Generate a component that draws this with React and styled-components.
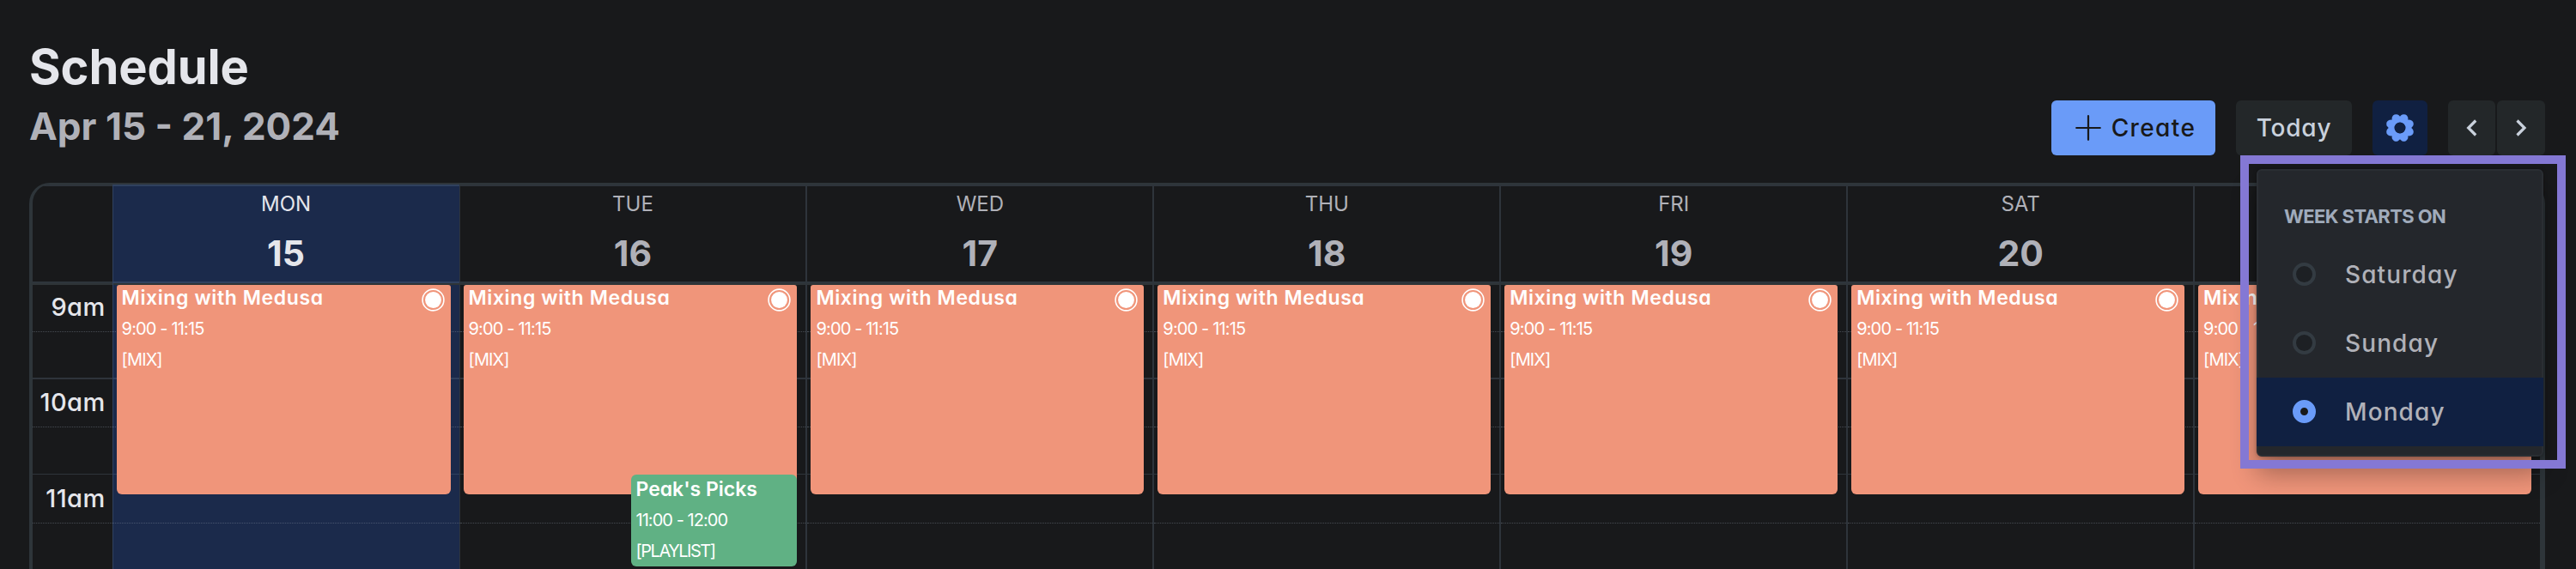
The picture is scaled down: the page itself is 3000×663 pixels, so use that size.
import React from 'react';
import styled, { createGlobalStyle, css } from 'styled-components';

const line = 'rgba(110, 135, 155, 0.25)';

const GlobalStyle = createGlobalStyle`
  *, *::before, *::after { box-sizing: border-box; }
  body {
    margin: 0;
    background: #18191b;
    color: #e5e6eb;
    font-family: Inter, 'Open Sans', sans-serif;
    font-feature-settings: 'cv11';
    overflow: hidden;
  }
`;

const Page = styled.main`
  position: relative;
  height: 663px;
  padding: 45px 36px 0 34px;
  overflow: hidden;
`;

const Header = styled.header`
  display: flex;
  justify-content: space-between;
  align-items: flex-end;
  height: 136px;
  margin-bottom: 32px;
`;

const Titles = styled.div`
  display: flex;
  flex-direction: column;
  gap: 4px;
  height: 136px;
`;

const Title = styled.h1`
  margin: 0;
  font-size: 56px;
  line-height: 66px;
  font-weight: 700;
  letter-spacing: -0.1px;
  font-feature-settings: normal;
`;

const Period = styled.h2`
  margin: 0;
  color: #b0b1b8;
  font-size: 44px;
  line-height: 64px;
  font-weight: 700;
  font-feature-settings: normal;
`;

const Toolbar = styled.div`
  display: flex;
  gap: 24px;
`;

const Pair = styled.div`
  display: flex;
  gap: 2px;
`;

const tones = {
  primary: css`background: #6a9bf8; color: #18191b; padding-left: 5px;`,
  active: css`background: #102041; color: #6a9bf8;`,
  plain: css`background: #232729; color: #c9d1dc;`,
};

const Button = styled.button`
  display: flex;
  align-items: center;
  justify-content: center;
  gap: 12px;
  width: ${(p) => p.$width}px;
  height: 64px;
  padding: 0;
  border: 0;
  border-radius: 6px;
  font: 500 28px/64px Inter, sans-serif;
  font-feature-settings: 'cv11';
  letter-spacing: ${(p) => p.$spacing || 0}px;
  ${(p) => tones[p.$tone || 'plain']}
`;

const Calendar = styled.section`
  height: 470px;
  border: solid #2e353a;
  border-width: 2px 6px 0 4px;
  border-radius: 24px 24px 0 0;
  overflow: hidden;
`;

const Columns = styled.div`
  display: grid;
  grid-template-columns: 92.6px repeat(7, 1fr);
`;

const HeadCell = styled.div`
  display: flex;
  flex-direction: column;
  align-items: center;
  gap: 7px;
  height: 115px;
  padding-top: 1px;
  border: solid ${line};
  border-width: 2px 0;
  border-left: ${(p) => p.$edge}px solid ${line};
  background: ${(p) => (p.$today ? '#1b2a4b' : 'transparent')};
  color: ${(p) => (p.$today ? '#e5e6eb' : '#b0b1b8')};
`;

const Weekday = styled.span`
  font-size: 24px;
  line-height: 40px;
`;

const DayNumber = styled.span`
  font-size: 41px;
  line-height: 60px;
  font-weight: 700;
`;

const Body = styled.div`
  position: relative;
  display: grid;
  grid-template-rows: 110px 112px 113px;
  border-left: ${(p) => p.$edge}px solid ${line};
  background: ${(p) => (p.$today ? '#1b2a4b' : 'transparent')};
`;

const Hour = styled.div`
  display: grid;
  grid-template-rows: 1fr 1fr;
  border-top: ${(p) => p.$rule}px solid ${(p) => (p.$first ? '#2e3437' : line)};
`;

const Half = styled.div`
  padding: ${(p) => p.$top || 0}px 8px 0 0;
  text-align: right;
  font-size: 29px;
  line-height: 48px;
  font-weight: 500;
  letter-spacing: 0.4px;
  & + & { border-top: 1px dotted rgba(140, 150, 165, 0.4); }
`;

const Event = styled.article`
  position: absolute;
  top: ${(p) => p.$top}px;
  left: ${(p) => p.$left};
  right: 10px;
  height: ${(p) => p.$height}px;
  padding: ${(p) => (p.$cut ? 0 : 2)}px 7px 0 6px;
  border-radius: ${(p) => (p.$cut ? '3px 3px 6px 6px' : '6px')};
  background: ${(p) => p.$color};
  color: #fff;
`;

const EventHead = styled.div`
  display: flex;
  justify-content: space-between;
  align-items: flex-start;
  height: 36px;
  margin-top: -3px;
`;

const EventTitle = styled.strong`
  font-size: 23px;
  line-height: 36px;
  font-weight: 600;
  letter-spacing: ${(p) => p.$spacing}px;
`;

const EventLine = styled.div`
  font-size: 20px;
  line-height: 36px;
  letter-spacing: ${(p) => p.$spacing}px;
`;

const RecordMark = styled.svg`
  margin-top: 7px;
`;

const Menu = styled.div`
  position: absolute;
  top: 197px;
  right: 38px;
  width: 334px;
  height: 335px;
  padding-top: 25px;
  border: 2px solid #2a2e33;
  border-radius: 6px;
  background: #24272c;
  box-shadow: 0 20px 30px rgba(0, 0, 0, 0.32), 0 0 4px rgba(0, 0, 0, 0.3);
`;

const MenuTitle = styled.div`
  padding-left: 30px;
  color: #a0abbb;
  font-size: 22px;
  line-height: 56px;
  font-weight: 700;
  letter-spacing: -0.6px;
`;

const Option = styled.div`
  display: flex;
  align-items: center;
  gap: 34px;
  height: 80px;
  margin: 0 -2px;
  padding: 0 0 1px 42px;
  background: ${(p) => (p.$selected ? '#102041' : 'transparent')};
  color: #b0b1b8;
  font-size: 28px;
  font-weight: 500;
  letter-spacing: 1.1px;
`;

const Radio = styled.span`
  width: 27px;
  height: 27px;
  border: ${(p) => (p.$selected ? '9.5px solid #6a9bf8' : '4px solid #333b42')};
  border-radius: 50%;
  background: ${(p) => (p.$selected ? '#18191b' : '#1d2024')};
`;

const Highlight = styled.div`
  position: absolute;
  top: 181px;
  right: 12px;
  width: 379px;
  height: 365px;
  border: 10px solid #8478d4;
`;

const PlusIcon = () => (
  <svg width="30" height="30" viewBox="0 0 30 30" stroke="currentColor" strokeWidth="2.2" strokeLinecap="round">
    <path d="M15 1.2v27.6M1.2 15h27.6" />
  </svg>
);

const GearIcon = () => (
  <svg width="36" height="36" viewBox="-18 -18 36 36" fill="currentColor">
    <circle r="10" fill="none" stroke="currentColor" strokeWidth="7" />
    {[22.5, 67.5, 112.5, 157.5, 202.5, 247.5, 292.5, 337.5].map((a) => (
      <circle key={a} cx="11.8" r="4.9" transform={`rotate(${a})`} />
    ))}
    <circle r="6.2" fill="#102041" />
  </svg>
);

const Chevron = ({ next }) => (
  <svg width="16" height="22" viewBox="0 0 16 22" fill="none" stroke="currentColor" strokeWidth="3.2">
    <path d={next ? 'M3.5 2.5L12 11L3.5 19.5' : 'M12.2 2.5L3.7 11L12.2 19.5'} />
  </svg>
);

const Record = () => (
  <RecordMark width="27" height="27" viewBox="-13.5 -13.5 27 27">
    <circle r="12.4" fill="none" stroke="#fff" strokeWidth="1.6" />
    <circle r="9.4" fill="#fff" />
  </RecordMark>
);

const days = [
  { name: 'MON', date: 15, today: true, edge: 1 },
  { name: 'TUE', date: 16, picks: true, edge: 1 },
  { name: 'WED', date: 17, edge: 2 },
  { name: 'THU', date: 18, edge: 2 },
  { name: 'FRI', date: 19, edge: 2 },
  { name: 'SAT', date: 20, edge: 2 },
  { name: '', date: '', edge: 2 },
];

const hours = [
  { label: '9am', rule: 2, top: 2, first: true },
  { label: '10am', rule: 2, top: 3 },
  { label: '11am', rule: 1, top: 4 },
];

const HourRows = ({ labels }) =>
  hours.map((h) => (
    <Hour key={h.label} $rule={h.rule} $first={h.first}>
      <Half $top={h.top}>{labels ? h.label : null}</Half>
      <Half />
    </Hour>
  ));

export default function App() {
  return (
    <Page>
      <GlobalStyle />
      <Header>
        <Titles>
          <Title>Schedule</Title>
          <Period>Apr 15 - 21, 2024</Period>
        </Titles>
        <Toolbar>
          <Button $tone="primary" $width={191} $spacing={1.4}><PlusIcon />Create</Button>
          <Button $width={135} $spacing={0.8}>Today</Button>
          <Button $tone="active" $width={64} aria-label="Settings"><GearIcon /></Button>
          <Pair>
            <Button $width={55} aria-label="Previous"><Chevron /></Button>
            <Button $width={56} aria-label="Next"><Chevron next /></Button>
          </Pair>
        </Toolbar>
      </Header>

      <Calendar>
        <Columns>
          <HeadCell $edge={0} />
          {days.map((d) => (
            <HeadCell key={d.name} $today={d.today} $edge={d.edge}>
              <Weekday>{d.name}</Weekday>
              <DayNumber>{d.date}</DayNumber>
            </HeadCell>
          ))}
        </Columns>
        <Columns>
          <Body $edge={0}><HourRows labels /></Body>
          {days.map((d) => (
            <Body key={d.name} $today={d.today} $edge={d.edge}>
              <HourRows />
              <Event $top={2} $left="4px" $height={244} $color="#f0957a" $cut>
                <EventHead>
                  <EventTitle $spacing={0.6}>Mixing with Medusa</EventTitle>
                  <Record />
                </EventHead>
                <EventLine $spacing={-0.85}>9:00 - 11:15</EventLine>
                <EventLine $spacing={-0.9}>[MIX]</EventLine>
              </Event>
              {d.picks && (
                <Event $top={223} $left="199px" $height={107} $color="#60b184">
                  <EventHead><EventTitle $spacing={0}>Peak's Picks</EventTitle></EventHead>
                  <EventLine $spacing={-0.95}>11:00 - 12:00</EventLine>
                  <EventLine $spacing={-1.5}>[PLAYLIST]</EventLine>
                </Event>
              )}
            </Body>
          ))}
        </Columns>
      </Calendar>

      <Menu>
        <MenuTitle>WEEK STARTS ON</MenuTitle>
        <Option><Radio />Saturday</Option>
        <Option><Radio />Sunday</Option>
        <Option $selected><Radio $selected />Monday</Option>
      </Menu>
      <Highlight />
    </Page>
  );
}
